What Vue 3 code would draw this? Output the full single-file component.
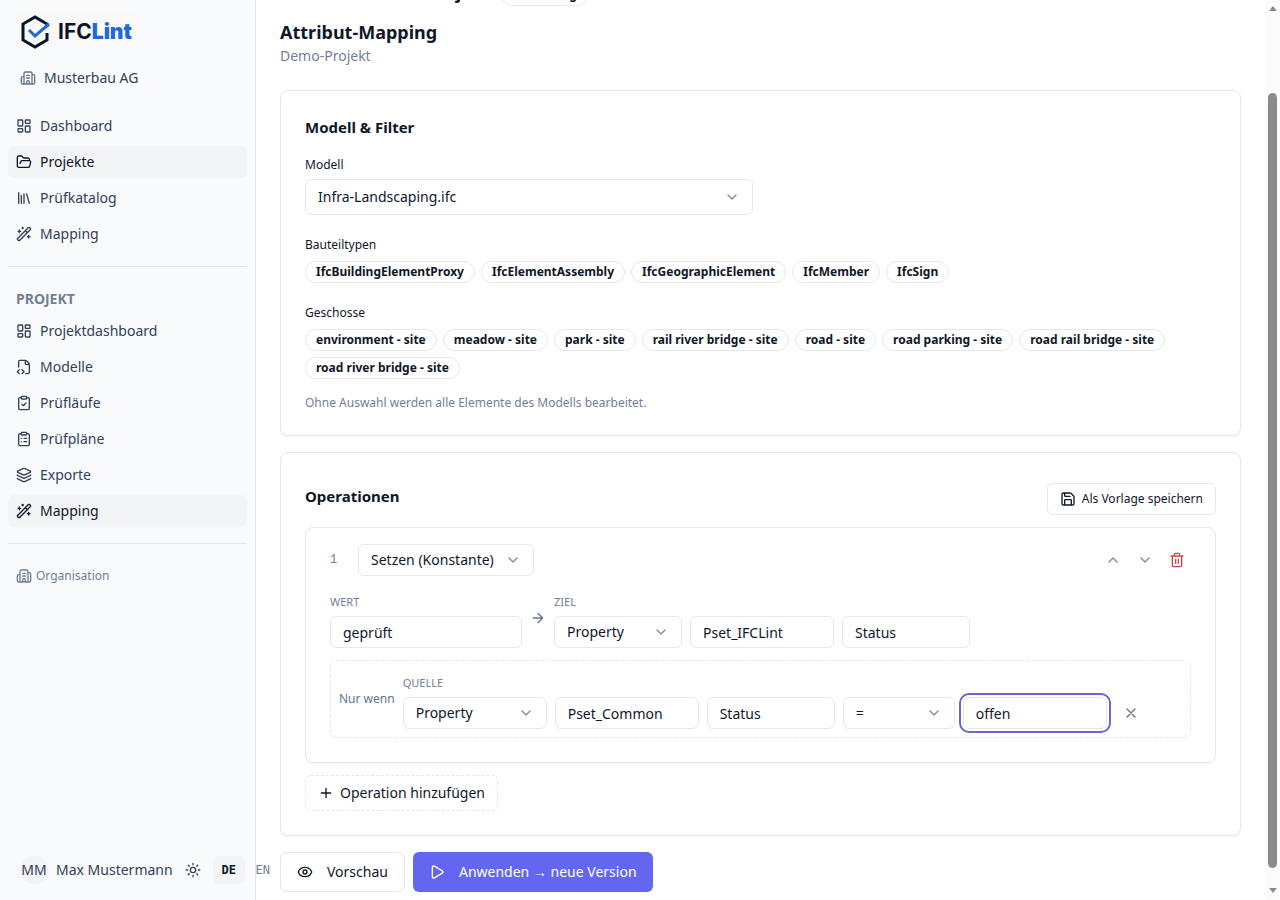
<template>
	<div class="shell">
		<aside class="sidebar">
			<a class="logo" href="#">
				<svg viewBox="0 0 32 34" aria-hidden="true">
					<path d="M27 12V9L15 2 3 9v16l12 7 12-7v-7" fill="none" stroke="#0b1324" stroke-width="3" />
					<path d="M9 15l6 6L29 9" fill="none" stroke="#2068d8" stroke-width="3" />
				</svg>
				<span>IFC<b>Lint</b></span>
			</a>
			<a class="tenant" href="#"><Icon name="building" />Musterbau AG</a>

			<nav class="nav">
				<a v-for="item of mainNav" :key="item.label" href="#" :class="{ active: item.active }">
					<Icon :name="item.icon" />{{item.label}}
				</a>
			</nav>
			<hr />
			<h2 class="nav-title">PROJEKT</h2>
			<nav class="nav">
				<a v-for="item of projectNav" :key="item.label" href="#" :class="{ active: item.active }">
					<Icon :name="item.icon" />{{item.label}}
				</a>
			</nav>
			<hr />
			<a class="organisation" href="#"><Icon name="building" />Organisation</a>

			<footer class="user">
				<span class="avatar">MM</span>
				<span class="user-name">Max Mustermann</span>
				<button class="theme" type="button" aria-label="Theme"><Icon name="sun" /></button>
				<div class="langs">
					<button v-for="l of ['DE', 'EN']" :key="l" type="button" :class="{ active: lang === l }" @click="lang = l">{{l}}</button>
				</div>
			</footer>
		</aside>

		<main>
			<header class="topbar">
				<a class="back" href="#"><Icon name="arrowLeft" />Zurück</a>
				<strong>Demo-Projekt</strong>
				<span class="badge">In Planung</span>
			</header>
			<h1>Attribut-Mapping</h1>
			<p class="subtitle">Demo-Projekt</p>

			<section class="card">
				<h2>Modell &amp; Filter</h2>
				<div class="field">
					<label for="model">Modell</label>
					<div class="select model">
						<select id="model" v-model="model">
							<option>Infra-Landscaping.ifc</option>
						</select>
						<Icon name="down" />
					</div>
				</div>
				<div v-for="group of filters" :key="group.label" class="group">
					<span>{{group.label}}</span>
					<div class="badges">
						<button v-for="name of group.values" :key="name" class="badge" type="button">{{name}}</button>
					</div>
				</div>
				<p class="hint">Ohne Auswahl werden alle Elemente des Modells bearbeitet.</p>
			</section>

			<section class="card">
				<div class="card-head">
					<h2>Operationen</h2>
					<button class="btn small" type="button"><Icon name="save" />Als Vorlage speichern</button>
				</div>

				<div class="operation">
					<div class="op-head">
						<span class="op-number">1</span>
						<div class="select w176">
							<select v-model="op.type" aria-label="Operation">
								<option>Setzen (Konstante)</option>
							</select>
							<Icon name="down" />
						</div>
						<div class="op-actions">
							<button type="button" aria-label="Nach oben"><Icon name="up" /></button>
							<button type="button" aria-label="Nach unten"><Icon name="down" /></button>
							<button class="danger" type="button" aria-label="Löschen"><Icon name="trash" /></button>
						</div>
					</div>

					<div class="op-row">
						<div class="op-field">
							<label for="value">WERT</label>
							<input id="value" v-model="op.value" class="w192" type="text" />
						</div>
						<span class="middle"><Icon name="arrowRight" /></span>
						<div class="op-field">
							<label for="target">ZIEL</label>
							<div class="controls">
								<div class="select w128">
									<select id="target" v-model="op.target">
										<option>Property</option>
									</select>
									<Icon name="down" />
								</div>
								<input v-model="op.pset" class="w144" type="text" aria-label="Pset" />
								<input v-model="op.property" class="w128" type="text" aria-label="Property" />
							</div>
						</div>
					</div>

					<div class="op-row condition">
						<span class="middle">Nur wenn</span>
						<div class="op-field">
							<label for="source">QUELLE</label>
							<div class="controls">
								<div class="select w144">
									<select id="source" v-model="cond.source">
										<option>Property</option>
									</select>
									<Icon name="down" />
								</div>
								<input v-model="cond.pset" class="w144" type="text" aria-label="Pset" />
								<input v-model="cond.property" class="w128" type="text" aria-label="Property" />
								<div class="select w112">
									<select v-model="cond.operator" aria-label="Operator">
										<option>=</option>
									</select>
									<Icon name="down" />
								</div>
								<input v-model="cond.value" class="w144 focused" type="text" aria-label="Vergleichswert" />
								<button class="remove" type="button" aria-label="Bedingung entfernen"><Icon name="x" /></button>
							</div>
						</div>
					</div>
				</div>

				<button class="btn add" type="button"><Icon name="plus" />Operation hinzufügen</button>
			</section>

			<div class="actions">
				<button class="btn large" type="button"><Icon name="eye" />Vorschau</button>
				<button class="btn large primary" type="button"><Icon name="play" />Anwenden → neue Version</button>
			</div>
		</main>

		<div class="scrollbar" aria-hidden="true">
			<i class="arrow-up"></i>
			<i class="thumb"></i>
			<i class="arrow-down"></i>
		</div>
	</div>
</template>

<script setup>
	import { ref, reactive, h } from "vue";


	const clipboard = '<rect x="8" y="2" width="8" height="4" rx="1"/><path d="M16 4h2a2 2 0 0 1 2 2v14a2 2 0 0 1-2 2H6a2 2 0 0 1-2-2V6a2 2 0 0 1 2-2h2"/>';

	const icons = {
		building: '<path d="M10 12h4M10 8h4M14 21v-3a2 2 0 0 0-4 0v3M6 10H4a2 2 0 0 0-2 2v7a2 2 0 0 0 2 2h16a2 2 0 0 0 2-2V9a2 2 0 0 0-2-2h-2M6 21V5a2 2 0 0 1 2-2h8a2 2 0 0 1 2 2v16"/>',
		dashboard: '<rect width="7" height="9" x="3" y="3" rx="1"/><rect width="7" height="5" x="14" y="3" rx="1"/><rect width="7" height="9" x="14" y="12" rx="1"/><rect width="7" height="5" x="3" y="16" rx="1"/>',
		folder: '<path d="m6 14 1.5-2.9A2 2 0 0 1 9.24 10H20a2 2 0 0 1 1.94 2.5l-1.54 6a2 2 0 0 1-1.95 1.5H4a2 2 0 0 1-2-2V5a2 2 0 0 1 2-2h3.9a2 2 0 0 1 1.69.9l.81 1.2a2 2 0 0 0 1.67.9H18a2 2 0 0 1 2 2v2"/>',
		library: '<path d="m16 6 4 14M12 6v14M8 8v12M4 4v16"/>',
		wand: '<path d="m21.64 3.64-1.28-1.28a1.21 1.21 0 0 0-1.72 0L2.36 18.64a1.21 1.21 0 0 0 0 1.72l1.28 1.28a1.2 1.2 0 0 0 1.72 0L21.64 5.36a1.2 1.2 0 0 0 0-1.72M14 7l3 3M5 6v4M19 14v4M10 2v2M7 8H3M21 16h-4M11 3H9"/>',
		fileCode: '<path d="M4 12.15V4a2 2 0 0 1 2-2h8a2.4 2.4 0 0 1 1.706.706l3.588 3.588A2.4 2.4 0 0 1 20 8v12a2 2 0 0 1-2 2h-3.35M14 2v5a1 1 0 0 0 1 1h5M5 16l-3 3 3 3M9 22l3-3-3-3"/>',
		check: clipboard + '<path d="m9 14 2 2 4-4"/>',
		list: clipboard + '<path d="M12 11h4M12 16h4M8 11h.01M8 16h.01"/>',
		layers: '<path d="M12.83 2.18a2 2 0 0 0-1.66 0L2.6 6.08a1 1 0 0 0 0 1.83l8.58 3.91a2 2 0 0 0 1.66 0l8.58-3.9a1 1 0 0 0 0-1.83zM2 12a1 1 0 0 0 .58.91l8.6 3.91a2 2 0 0 0 1.65 0l8.58-3.9A1 1 0 0 0 22 12M2 17a1 1 0 0 0 .58.91l8.6 3.91a2 2 0 0 0 1.65 0l8.58-3.9A1 1 0 0 0 22 17"/>',
		sun: '<circle cx="12" cy="12" r="4"/><path d="M12 2v2M12 20v2M4.93 4.93l1.41 1.41M17.66 17.66l1.41 1.41M2 12h2M20 12h2M6.34 17.66l-1.41 1.41M19.07 4.93l-1.41 1.41"/>',
		down: '<path d="m6 9 6 6 6-6"/>',
		up: '<path d="m18 15-6-6-6 6"/>',
		save: '<path d="M15.2 3a2 2 0 0 1 1.4.6l3.8 3.8a2 2 0 0 1 .6 1.4V19a2 2 0 0 1-2 2H5a2 2 0 0 1-2-2V5a2 2 0 0 1 2-2zM17 21v-7a1 1 0 0 0-1-1H8a1 1 0 0 0-1 1v7M7 3v4a1 1 0 0 0 1 1h7"/>',
		trash: '<path d="M10 11v6M14 11v6M19 6v14a2 2 0 0 1-2 2H7a2 2 0 0 1-2-2V6M3 6h18M8 6V4a2 2 0 0 1 2-2h4a2 2 0 0 1 2 2v2"/>',
		arrowLeft: '<path d="m12 19-7-7 7-7M19 12H5"/>',
		arrowRight: '<path d="M5 12h14M12 5l7 7-7 7"/>',
		x: '<path d="M18 6 6 18M6 6l12 12"/>',
		plus: '<path d="M5 12h14M12 5v14"/>',
		eye: '<path d="M2.062 12.348a1 1 0 0 1 0-.696 10.75 10.75 0 0 1 19.876 0 1 1 0 0 1 0 .696 10.75 10.75 0 0 1-19.876 0"/><circle cx="12" cy="12" r="3"/>',
		play: '<path d="M5 5a2 2 0 0 1 3.008-1.728l11.997 6.998a2 2 0 0 1 .003 3.458l-12 7A2 2 0 0 1 5 19z"/>',
	};

	const Icon = ({ name }) => h("svg", { class: "icon", viewBox: "0 0 24 24", "aria-hidden": "true", innerHTML: icons[name] });
	Icon.props = ["name"];


	const mainNav = [
		{ label: "Dashboard", icon: "dashboard" },
		{ label: "Projekte", icon: "folder", active: true },
		{ label: "Prüfkatalog", icon: "library" },
		{ label: "Mapping", icon: "wand" },
	];

	const projectNav = [
		{ label: "Projektdashboard", icon: "dashboard" },
		{ label: "Modelle", icon: "fileCode" },
		{ label: "Prüfläufe", icon: "check" },
		{ label: "Prüfpläne", icon: "list" },
		{ label: "Exporte", icon: "layers" },
		{ label: "Mapping", icon: "wand", active: true },
	];

	const filters = [
		{
			label: "Bauteiltypen",
			values: ["IfcBuildingElementProxy", "IfcElementAssembly", "IfcGeographicElement", "IfcMember", "IfcSign"],
		},
		{
			label: "Geschosse",
			values: [
				"environment - site", "meadow - site", "park - site", "rail river bridge - site",
				"road - site", "road parking - site", "road rail bridge - site", "road river bridge - site",
			],
		},
	];

	const lang = ref("DE");
	const model = ref("Infra-Landscaping.ifc");

	const op = reactive({
		type: "Setzen (Konstante)",
		value: "geprüft",
		target: "Property",
		pset: "Pset_IFCLint",
		property: "Status",
	});

	const cond = reactive({
		source: "Property",
		pset: "Pset_Common",
		property: "Status",
		operator: "=",
		value: "offen",
	});
</script>

<style>
	body
	{
		margin: 0;
		background: #fff;
	}
</style>

<style scoped>
	.shell
	{
		display: flex;
		height: 100vh;
		overflow: hidden;
		font: 14px/20px "Noto Sans", sans-serif;
		color: #0f172a;
	}

	.shell *
	{
		box-sizing: border-box;
	}

	h1, h2, p
	{
		margin: 0;
	}

	a
	{
		color: inherit;
		text-decoration: none;
	}

	button, input, select
	{
		margin: 0;
		font: inherit;
		color: inherit;
	}

	button
	{
		display: inline-flex;
		align-items: center;
		justify-content: center;
		padding: 0;
		border: 0;
		background: none;
		white-space: nowrap;
	}

	.icon
	{
		flex: none;
		width: 16px;
		height: 16px;
		fill: none;
		stroke: currentColor;
		stroke-width: 2;
		stroke-linecap: round;
		stroke-linejoin: round;
	}

	/* sidebar */
	.sidebar
	{
		position: relative;
		z-index: 1;
		display: flex;
		flex-direction: column;
		flex: none;
		width: 256px;
		padding: 12px 8px;
		border-right: 1px solid #e2e5ea;
		background: #f8fafc;
		color: #334155;
	}

	.logo
	{
		display: flex;
		align-items: center;
		align-self: flex-start;
		gap: 6px;
		height: 38px;
		margin-left: 9px;
		padding: 2px 4px 0 3px;
		background: #f9f9fa;
		color: #0b1324;
		font: 700 21px/24px Inter, sans-serif;
	}

	.logo svg
	{
		width: 32px;
		height: 34px;
	}

	.logo b
	{
		color: #2068d8;
	}

	.tenant
	{
		display: flex;
		align-items: center;
		gap: 8px;
		height: 32px;
		margin: 12px 0 16px;
		padding: 0 12px;
	}

	.tenant .icon
	{
		color: #64748b;
	}

	.nav
	{
		display: flex;
		flex-direction: column;
		gap: 4px;
	}

	.nav a
	{
		display: flex;
		align-items: center;
		gap: 8px;
		height: 32px;
		padding: 0 8px;
		border-radius: 6px;
	}

	.nav a.active
	{
		background: #f3f4f6;
		color: #0f172a;
	}

	hr
	{
		width: 100%;
		margin: 16px 0;
		border: 0;
		border-top: 1px solid #e2e5ea;
	}

	.nav-title
	{
		padding: 6px 8px;
		color: #718096;
		font-size: 14px;
		line-height: 20px;
		font-weight: 700;
	}

	.organisation
	{
		display: flex;
		align-items: center;
		gap: 4px;
		padding: 6px 8px;
		color: #718096;
		font-size: 12px;
	}

	.user
	{
		display: flex;
		align-items: center;
		gap: 8px;
		margin-top: auto;
		padding: 0 12px 4px;
		white-space: nowrap;
	}

	.avatar
	{
		display: flex;
		flex: none;
		align-items: center;
		justify-content: center;
		width: 28px;
		height: 28px;
		border-radius: 50%;
		background: #f3f4f6;
	}

	.theme
	{
		flex: none;
		width: 24px;
		height: 28px;
	}

	.langs
	{
		display: flex;
		gap: 2px;
	}

	.langs button
	{
		flex: none;
		width: 32px;
		height: 28px;
		border-radius: 6px;
		color: #718096;
		font: 12px/16px "DejaVu Sans Mono", monospace;
	}

	.langs button.active
	{
		background: #f3f4f6;
		color: #0f172a;
		font-weight: 700;
	}

	/* content */
	main
	{
		flex: 1;
		min-width: 0;
		overflow: hidden;
		padding: 0 24px 8px;
	}

	.topbar
	{
		display: flex;
		align-items: flex-end;
		gap: 10px;
		height: 28px;
		margin: -22px 0 12px;
	}

	.topbar strong
	{
		font-size: 18px;
		line-height: 28px;
		font-weight: 700;
	}

	.back
	{
		display: flex;
		align-items: center;
		gap: 8px;
		height: 28px;
		padding: 0 4px;
	}

	h1
	{
		font-size: 18px;
		line-height: 28px;
		font-weight: 700;
	}

	.subtitle
	{
		color: #718096;
	}

	.card
	{
		margin-top: 16px;
		padding: 24px;
		border: 1px solid #e5e7eb;
		border-radius: 8px;
		box-shadow: 0 1px 2px rgba(0, 0, 0, .05);
	}

	.subtitle + .card
	{
		margin-top: 24px;
	}

	.card h2
	{
		font-size: 15px;
		line-height: 24px;
		font-weight: 700;
	}

	.field
	{
		display: flex;
		flex-direction: column;
		gap: 6px;
		margin-top: 18px;
		font-size: 12px;
		line-height: 16px;
	}

	.group
	{
		display: flex;
		flex-direction: column;
		gap: 8px;
		margin-top: 22px;
		font-size: 12px;
		line-height: 16px;
	}

	.badges
	{
		display: flex;
		flex-wrap: wrap;
		gap: 6px;
	}

	.badge
	{
		height: 22px;
		padding: 0 10px;
		border: 1px solid #e5e7eb;
		border-radius: 11px;
		font-size: 12px;
		line-height: 20px;
		font-weight: 700;
	}

	.hint
	{
		margin-top: 16px;
		color: #718096;
		font-size: 12px;
		line-height: 16px;
	}

	.select
	{
		display: grid;
		align-items: center;
		font-size: 14px;
		line-height: 20px;
	}

	.select > *
	{
		grid-area: 1 / 1;
	}

	.select .icon
	{
		justify-self: end;
		margin-right: 13px;
		opacity: .5;
		pointer-events: none;
	}

	select, input
	{
		width: 100%;
		height: 32px;
		padding: 0 12px;
		border: 1px solid #e5e7eb;
		border-radius: 6px;
		outline: 0;
		background: #fff;
		appearance: none;
	}

	input.focused
	{
		outline: 2px solid #6a67cf;
		outline-offset: 2px;
	}

	.model
	{
		max-width: 448px;
	}

	.model select
	{
		height: 36px;
	}

	.w112 { width: 112px; }
	.w128 { width: 128px; }
	.w144 { width: 144px; }
	.w176 { width: 176px; }
	.w192 { width: 192px; }

	.card-head
	{
		display: flex;
		align-items: flex-start;
		justify-content: space-between;
		padding-top: 6px;
	}

	.card-head h2
	{
		line-height: 26px;
	}

	.btn
	{
		gap: 8px;
		height: 36px;
		padding: 0 12px;
		border: 1px solid #e5e7eb;
		border-radius: 6px;
		background: #fff;
	}

	.btn.small
	{
		gap: 6px;
		height: 32px;
		font-size: 12px;
	}

	.btn.add
	{
		gap: 6px;
		margin-top: 12px;
		border-style: dashed;
	}

	.btn.large
	{
		gap: 14px;
		height: 40px;
		padding: 0 16px;
	}

	.btn.primary
	{
		border: 0;
		background: #6366f1;
		color: #fff;
	}

	.operation
	{
		margin-top: 12px;
		padding: 16px 24px 24px;
		border: 1px solid #e5e7eb;
		border-radius: 8px;
		box-shadow: 0 1px 2px rgba(0, 0, 0, .05);
	}

	.op-head
	{
		display: flex;
		align-items: center;
		gap: 8px;
		margin-bottom: 16px;
	}

	.op-number
	{
		width: 20px;
		color: #718096;
		font: 12px/18px "Liberation Mono", monospace;
	}

	.op-actions
	{
		display: flex;
		gap: 4px;
		margin-left: auto;
	}

	.op-actions button
	{
		width: 28px;
		height: 28px;
		color: #888;
	}

	.op-actions button.danger
	{
		color: #d64545;
	}

	.op-row
	{
		display: flex;
		align-items: center;
		gap: 8px;
	}

	.op-field
	{
		display: flex;
		flex-direction: column;
		gap: 4px;
	}

	.op-field label
	{
		color: #718096;
		font-size: 11px;
		line-height: 20px;
	}

	.controls
	{
		display: flex;
		gap: 8px;
	}

	.controls .w112, .controls .w128, .controls .w144
	{
		flex: none;
	}

	.middle
	{
		display: flex;
		margin-bottom: 4px;
		color: #64748b;
		font-size: 12px;
		line-height: 16px;
		white-space: nowrap;
	}

	.condition
	{
		margin-top: 12px;
		padding: 12px 8px 8px;
		border: 1px dashed #e2e5ea;
		border-radius: 6px;
	}

	.remove
	{
		width: 32px;
		height: 32px;
		color: #64748b;
	}

	.actions
	{
		display: flex;
		gap: 8px;
		margin-top: 16px;
	}

	/* page scrollbar */
	.scrollbar
	{
		display: flex;
		flex-direction: column;
		align-items: center;
		flex: none;
		width: 15px;
		padding: 6px 0 7px;
		background: #fcfcfc;
	}

	.thumb
	{
		flex: 1;
		width: 9px;
		margin: 82px 0 20px;
		border-radius: 5px;
		background: #8b8b8b;
	}

	.arrow-up, .arrow-down
	{
		border: 4px solid transparent;
	}

	.arrow-up
	{
		border-top: 0;
		border-bottom: 5px solid #8b8b8b;
	}

	.arrow-down
	{
		border-bottom: 0;
		border-top: 5px solid #8b8b8b;
	}
</style>
